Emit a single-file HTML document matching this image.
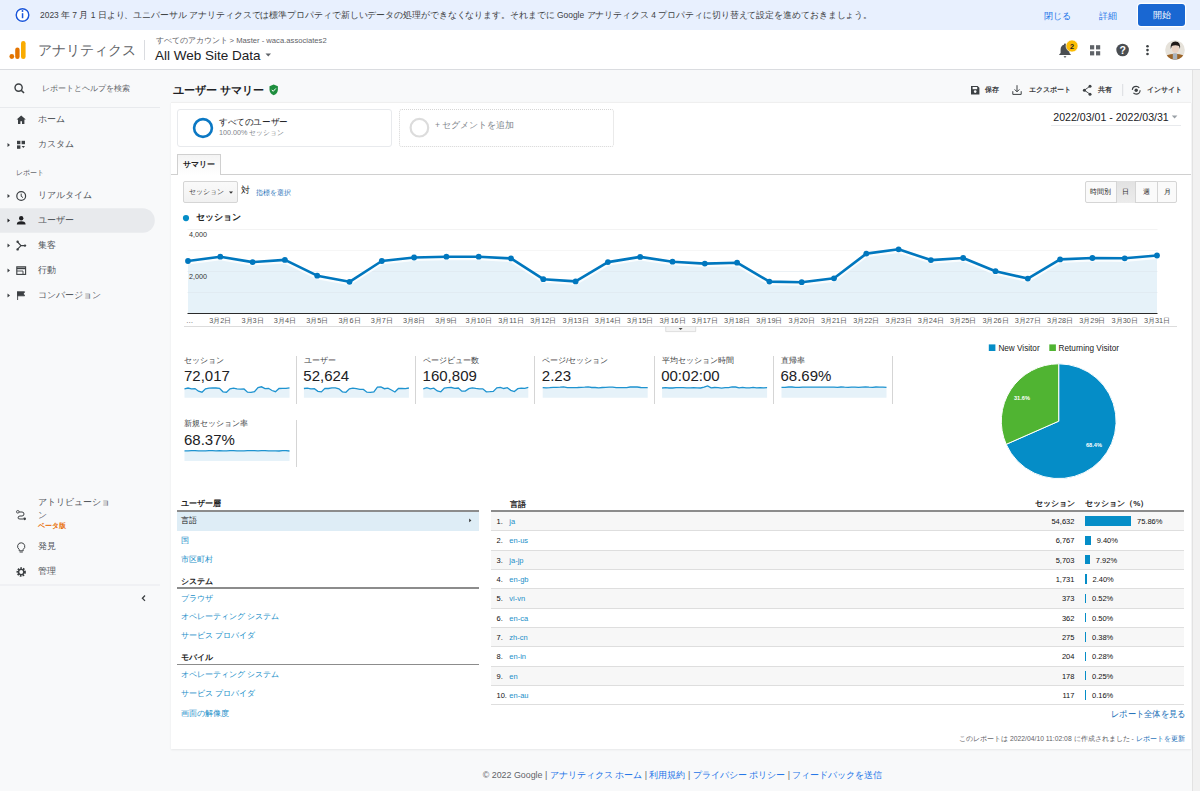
<!DOCTYPE html>
<html><head><meta charset="utf-8">
<style>
*{box-sizing:border-box;margin:0;padding:0}
html,body{width:1200px;height:791px;overflow:hidden;background:#f8f9fa;font-family:"Liberation Sans",sans-serif;color:#202124}
.a{position:absolute;white-space:nowrap}
.c{transform:translateY(-50%)}
#banner{position:absolute;left:0;top:0;width:1200px;height:30px;background:#e8f0fe}
#header{position:absolute;left:0;top:30px;width:1200px;height:40px;background:#fff;border-bottom:1px solid #dadce0}
#side{position:absolute;left:0;top:70px;width:160px;height:721px;background:#f8f9fa}
#scroll{position:absolute;left:1192px;top:70px;width:8px;height:721px;background:#f1f1f1;border-left:1px solid #e2e2e2}
#card{position:absolute;left:171px;top:102px;width:1020px;height:647px;background:#fff;border-top:1px solid #efefef;box-shadow:0 1px 2px rgba(0,0,0,0.07)}
.nav{font-size:8.7px;color:#51555a}
.blue{color:#1a73e8}
.lnk{color:#1b8fc9}
svg{position:absolute;left:0;top:0;overflow:visible}
.sa{fill:#e6f2f9}
.sl{fill:none;stroke:#1e93d0;stroke-width:1.3}
.ml{font-size:8px;color:#3c4043}
.mv{font-size:15px;color:#202124}
.vd{position:absolute;width:1px;background:#d5d5d5}
.row{position:absolute;left:491px;width:693px;height:19.3px;border-bottom:1px solid #dedede}
.rn{font-size:7.5px;color:#111}
.rl{font-size:7.5px;color:#1b8fc9}
.rv{font-size:7.5px;color:#111}
.ln{font-size:8px;color:#1b8fc9}
</style></head><body>
<div id="banner"></div>
<div id="header"></div>
<div id="side"></div>
<div id="card"></div>
<div id="scroll"></div>

<!-- banner content -->
<svg width="1200" height="791">
  <circle cx="22.5" cy="15" r="7.6" fill="#fff"/><circle cx="22.5" cy="15" r="6.3" fill="none" stroke="#1a56db" stroke-width="1.5"/>
  <rect x="21.8" y="13.2" width="1.5" height="5" fill="#1a56db"/>
  <circle cx="22.5" cy="11" r="0.95" fill="#1a56db"/>
</svg>
<div class="a" style="transform:translateY(-50%) scaleX(0.9904);transform-origin:left center;left:40px;top:15.7px;font-size:8.53px;color:#3c4043">2023 年 7 月 1 日より、ユニバーサル アナリティクスでは標準プロパティで新しいデータの処理ができなくなります。それまでに Google アナリティクス 4 プロパティに切り替えて設定を進めておきましょう。</div>
<div class="a c blue" style="left:1044px;top:15.5px;font-size:9px">閉じる</div>
<div class="a c blue" style="left:1098.5px;top:15.5px;font-size:9px">詳細</div>
<div class="a" style="left:1138px;top:4px;width:47px;height:22px;background:#1967d2;border-radius:3px;box-shadow:0 0 0 1.2px #fff;color:#fff;font-size:9.6px;text-align:center;line-height:22px;font-size:9px">開始</div>

<!-- header content -->
<svg width="1200" height="791">
  <circle cx="11.8" cy="56.5" r="2.4" fill="#e37400"/>
  <rect x="15.2" y="47.5" width="4.4" height="11.5" rx="2.2" fill="#e37400"/>
  <rect x="21" y="41" width="4.6" height="18" rx="2.3" fill="#f9ab00"/>
  <rect x="144" y="40" width="1" height="20" fill="#dadce0"/>
  <path d="M265.5,53.5 L271,53.5 L268.25,56.5 Z" fill="#5f6368"/>
  <!-- bell -->
  <path d="M1065,43.4 c-0.6,0 -1,0.4 -1,1 v0.4 c-2.2,0.5 -3.4,2.4 -3.4,4.6 v3.6 l-1.4,1.4 v0.7 h11.6 v-0.7 l-1.4,-1.4 v-3.6 c0,-2.2 -1.2,-4.1 -3.4,-4.6 v-0.4 c0,-0.6 -0.4,-1 -1,-1z M1063.7,56.2 h2.6 a1.3,1.3 0 0 1 -2.6,0z" fill="#4a4e52"/>
  <circle cx="1072" cy="46" r="6" fill="#fbbc04" stroke="#fff" stroke-width="0.6"/>
  <text x="1072" y="48.6" font-family="Liberation Sans, sans-serif" font-size="7.4" font-weight="bold" fill="#202124" text-anchor="middle">2</text>
  <!-- grid -->
  <rect x="1090" y="45.2" width="4.2" height="4.2" fill="#5f6368"/><rect x="1096" y="45.2" width="4.2" height="4.2" fill="#5f6368"/>
  <rect x="1090" y="51.2" width="4.2" height="4.2" fill="#5f6368"/><rect x="1096" y="51.2" width="4.2" height="4.2" fill="#5f6368"/>
  <!-- help -->
  <circle cx="1122.6" cy="50" r="6.3" fill="#4a4e52"/>
  <text x="1122.6" y="53.8" font-family="Liberation Sans, sans-serif" font-size="10.5" font-weight="bold" fill="#fff" text-anchor="middle">?</text>
  <!-- dots -->
  <circle cx="1147.5" cy="46.2" r="1.3" fill="#3c4043"/><circle cx="1147.5" cy="50.1" r="1.3" fill="#3c4043"/><circle cx="1147.5" cy="54" r="1.3" fill="#3c4043"/>
  <!-- avatar -->
  <clipPath id="av"><circle cx="1175" cy="50" r="9.8"/></clipPath>
  <g clip-path="url(#av)">
  <rect x="1165" y="40" width="20" height="20" fill="#e6e2da"/>
  <path d="M1164,62 L1166,55.6 Q1175,52 1184,55.6 L1186,62 Z" fill="#9c6428"/>
  <rect x="1172.8" y="53.5" width="4.4" height="8" fill="#aab3bd"/>
  <ellipse cx="1175.4" cy="48.6" rx="3.6" ry="4.4" fill="#ead2c2"/>
  <path d="M1170.8,49 Q1170,41.6 1175.4,41.6 Q1180.8,41.6 1180,49 L1179,46 Q1175.4,44.6 1171.8,46 Z" fill="#1f1a17"/>
  </g>
</svg>
<div class="a c" style="left:38px;top:49.5px;font-size:14.1px;color:#5f6368">アナリティクス</div>
<div class="a c" style="left:155.5px;top:41.3px;font-size:7.65px;color:#5f6368">すべてのアカウント &gt; Master - waca.associates2</div>
<div class="a c" style="left:155px;top:55.2px;font-size:13.5px;color:#202124">All Web Site Data</div>

<!-- sidebar -->
<svg width="1200" height="791">
  <circle cx="18.6" cy="87.6" r="3.6" fill="none" stroke="#3c4043" stroke-width="1.4"/>
  <path d="M21.2,90.2 L24,93" stroke="#3c4043" stroke-width="1.6"/>
  <rect x="0" y="107" width="160" height="1" fill="#e8eaed"/>
  <path d="M0,208.3 H142.6 A12.2,12.2 0 0 1 142.6,232.7 H0 Z" fill="#e8eaed"/>
  <rect x="0" y="584.5" width="160" height="1" fill="#e8eaed"/>
  <!-- arrows -->
  <path d="M7.5,143 L10,145 L7.5,147 Z" fill="#3c4043"/>
  <path d="M7.5,194 L10,196 L7.5,198 Z" fill="#3c4043"/>
  <path d="M7.5,218.5 L10,220.5 L7.5,222.5 Z" fill="#202124"/>
  <path d="M7.5,243.5 L10,245.5 L7.5,247.5 Z" fill="#3c4043"/>
  <path d="M7.5,268.5 L10,270.5 L7.5,272.5 Z" fill="#3c4043"/>
  <path d="M7.5,293.5 L10,295.5 L7.5,297.5 Z" fill="#3c4043"/>
  <!-- home -->
  <path d="M21.2,115.6 L16.6,119.6 H18 V124 H20.4 V121.2 H22 V124 H24.4 V119.6 H25.8 Z" fill="#3c4043"/>
  <!-- custom -->
  <rect x="17" y="140.8" width="3.4" height="3.4" fill="#3c4043"/><rect x="21.6" y="140.8" width="3.4" height="3.4" fill="#3c4043"/>
  <rect x="17" y="145.4" width="3.4" height="3.4" fill="#3c4043"/><path d="M21.6,146 h3.4 l-1.7,2 z" fill="#3c4043"/>
  <!-- clock -->
  <circle cx="21.2" cy="196" r="4.4" fill="none" stroke="#3c4043" stroke-width="1.2"/>
  <path d="M21.2,193.6 V196.3 L23,197.6" fill="none" stroke="#3c4043" stroke-width="1"/>
  <!-- user -->
  <circle cx="21.2" cy="218.2" r="2.2" fill="#202124"/>
  <path d="M16.8,224.5 Q16.8,221.3 21.2,221.3 Q25.6,221.3 25.6,224.5 Z" fill="#202124"/>
  <!-- acquisition -->
  <path d="M17.6,242 L21,245.6 L24.8,245.6 M17.6,249.2 L21,245.6" fill="none" stroke="#3c4043" stroke-width="1.1"/>
  <circle cx="17.6" cy="241.8" r="1.2" fill="#3c4043"/><circle cx="17.6" cy="249.4" r="1.2" fill="#3c4043"/><circle cx="25" cy="245.6" r="1.2" fill="#3c4043"/>
  <!-- behavior -->
  <rect x="16.8" y="266.8" width="8.8" height="7.6" fill="none" stroke="#3c4043" stroke-width="1.1"/>
  <path d="M16.8,268.4 H25.6" stroke="#3c4043" stroke-width="1.6"/><path d="M16.8,271 H23 V274.4" fill="none" stroke="#3c4043" stroke-width="0.9"/>
  <!-- flag -->
  <path d="M17.6,291.4 V300 M17.6,291.8 H24.6 L23.4,293.8 L24.6,295.8 H17.6 Z" fill="#3c4043" stroke="#3c4043" stroke-width="0.9"/>
  <!-- attribution -->
  <circle cx="17.8" cy="511.8" r="1.3" fill="none" stroke="#3c4043" stroke-width="0.9"/>
  <path d="M19,512 H22 Q24,512 24,514 Q24,516 22,516 H20 Q18,516 18,518 Q18,519 20,519 H23" fill="none" stroke="#3c4043" stroke-width="1"/>
  <circle cx="24.6" cy="518.8" r="1.4" fill="#3c4043"/>
  <!-- bulb -->
  <path d="M21.2,542.8 a3.6,3.6 0 0 0 -2,6.6 v1.4 h4 v-1.4 a3.6,3.6 0 0 0 -2,-6.6 z" fill="none" stroke="#3c4043" stroke-width="1"/>
  <rect x="19.6" y="551.6" width="3.2" height="0.9" fill="#3c4043"/>
  <!-- gear -->
  <circle cx="21.2" cy="572" r="3.6" fill="none" stroke="#3c4043" stroke-width="2.2" stroke-dasharray="1.6,1"/>
  <circle cx="21.2" cy="572" r="2.6" fill="none" stroke="#3c4043" stroke-width="1.4"/>
  <path d="M145,595.5 L142.4,598.2 L145,600.9" fill="none" stroke="#3c4043" stroke-width="1.3"/>
</svg>
<div class="a c" style="left:41.5px;top:88.5px;font-size:7.75px;color:#5f6368">レポートとヘルプを検索</div>
<div class="a c nav" style="left:37.7px;top:120px">ホーム</div>
<div class="a c nav" style="left:37.7px;top:145px">カスタム</div>
<div class="a c" style="left:15.6px;top:173px;font-size:6.8px;color:#5f6368">レポート</div>
<div class="a c nav" style="left:37.7px;top:196px">リアルタイム</div>
<div class="a c nav" style="left:37.7px;top:220.5px">ユーザー</div>
<div class="a c nav" style="left:37.7px;top:245.5px">集客</div>
<div class="a c nav" style="left:37.7px;top:270.5px">行動</div>
<div class="a c nav" style="left:37.7px;top:295.5px">コンバージョン</div>
<div class="a c nav" style="left:37.7px;top:503.4px">アトリビューショ</div>
<div class="a c nav" style="left:37.7px;top:516.3px">ン</div>
<div class="a c" style="left:37.7px;top:526px;font-size:6.95px;font-weight:bold;color:#e8710a">ベータ版</div>
<div class="a c nav" style="left:37.7px;top:547.2px">発見</div>
<div class="a c nav" style="left:37.7px;top:572px">管理</div>

<!-- title bar -->
<div class="a c" style="left:173px;top:89.6px;font-size:11.35px;font-weight:bold;color:#202124">ユーザー サマリー</div>
<svg width="1200" height="791">
  <path d="M273.7,84.6 L269.5,86.2 V89.6 Q269.5,93.6 273.7,95.2 Q277.9,93.6 277.9,89.6 V86.2 Z" fill="#1e8e3e"/>
  <path d="M271.7,89.8 L273.2,91.3 L275.9,88.4" fill="none" stroke="#fff" stroke-width="1"/>
  <!-- save -->
  <path d="M971,86 H977.6 L979.4,87.8 V94.4 H971 Z" fill="#3c4043"/>
  <rect x="972.6" y="87" width="4.6" height="2.2" fill="#f8f9fa"/>
  <circle cx="975.2" cy="91.6" r="1.3" fill="#f8f9fa"/>
  <!-- export -->
  <path d="M1017,85.2 V91.6 M1014.6,89.4 L1017,91.8 L1019.4,89.4 M1012.8,91.2 V94.4 H1021.2 V91.2" fill="none" stroke="#3c4043" stroke-width="1"/>
  <!-- share -->
  <circle cx="1090" cy="86.2" r="1.5" fill="#3c4043"/><circle cx="1084.4" cy="90.2" r="1.5" fill="#3c4043"/><circle cx="1090" cy="94.2" r="1.5" fill="#3c4043"/>
  <path d="M1090,86.2 L1084.4,90.2 L1090,94.2" fill="none" stroke="#3c4043" stroke-width="0.9"/>
  <rect x="1122.2" y="84" width="1" height="12" fill="#dadce0"/>
  <!-- insight -->
  <circle cx="1136.2" cy="90.2" r="3.9" fill="none" stroke="#3c4043" stroke-width="1.2" stroke-dasharray="9,3.3"/>
  <circle cx="1136.2" cy="90.2" r="1.7" fill="#3c4043"/>
  <!-- date triangle -->
  <path d="M1171.8,115.6 L1177.4,115.6 L1174.6,118.6 Z" fill="#9aa0a6"/>
  <rect x="1051" y="125" width="130" height="1" fill="#e8eaed"/>
</svg>
<div class="a c" style="left:985.4px;top:90.2px;font-size:7.2px;font-weight:bold;color:#3c4043">保存</div>
<div class="a c" style="left:1028.7px;top:90.2px;font-size:7.2px;font-weight:bold;color:#3c4043">エクスポート</div>
<div class="a c" style="left:1098.3px;top:90.2px;font-size:7.2px;font-weight:bold;color:#3c4043">共有</div>
<div class="a c" style="left:1146.9px;top:90.2px;font-size:7.2px;font-weight:bold;color:#3c4043">インサイト</div>
<div class="a c" style="left:1053.3px;top:116.8px;font-size:10.6px;color:#202124">2022/03/01 - 2022/03/31</div>

<!-- segments -->
<div class="a" style="left:177px;top:108.8px;width:215px;height:38.7px;border:1px solid #e8eaed;border-radius:3px;background:#fff"></div>
<div class="a" style="left:399px;top:108.8px;width:215px;height:38.7px;border:1px dotted #d6d6d6;border-radius:3px;background:#fff"></div>
<svg width="1200" height="791">
  <circle cx="203" cy="128" r="8.9" fill="none" stroke="#0b78c4" stroke-width="2.6"/>
  <circle cx="419.4" cy="127.7" r="8.8" fill="none" stroke="#dcdcdc" stroke-width="2.2"/>
</svg>
<div class="a" style="transform:translateY(-50%) scaleX(0.955);transform-origin:left center;left:219.2px;top:122.8px;font-size:8.58px;color:#202124">すべてのユーザー</div>
<div class="a" style="transform:translateY(-50%) scaleX(0.975);transform-origin:left center;left:219.2px;top:133px;font-size:7.4px;color:#80868b">100.00% セッション</div>
<div class="a c" style="left:435px;top:126px;font-size:8.5px;color:#80868b">+ セグメントを追加</div>

<!-- tabs -->
<div class="a" style="left:171px;top:174px;width:1020px;height:1px;background:#d0d0d0"></div>
<div class="a" style="left:177px;top:154px;width:44px;height:21px;border:1px solid #d0d0d0;border-bottom:none;background:linear-gradient(#f4f4f4,#fff);"></div>
<div class="a c" style="left:183px;top:164.4px;font-size:7.97px;font-weight:bold;color:#222">サマリー</div>

<!-- chart controls -->
<div class="a" style="left:183.4px;top:181.3px;width:54.4px;height:21.5px;border:1px solid #d5d5d5;border-radius:2px;background:linear-gradient(#fafafa,#f1f1f1)"></div>
<div class="a c" style="left:188.8px;top:192.3px;font-size:7.2px;color:#444">セッション</div>
<svg width="1200" height="791"><path d="M229,191.6 L233,191.6 L231,193.8 Z" fill="#333"/></svg>
<div class="a c" style="left:241px;top:191.4px;font-size:8.6px;color:#222">対</div>
<div class="a c" style="left:256.2px;top:192.8px;font-size:7.2px;color:#1b70b8">指標を選択</div>
<div class="a" style="left:1085px;top:181px;width:92px;height:22px;border:1px solid #d5d5d5;border-radius:2px;background:#fafafa"></div>
<div class="a" style="left:1115.7px;top:181px;width:20.5px;height:22px;background:linear-gradient(#e2e2e2,#ececec);border-left:1px solid #d5d5d5;border-right:1px solid #d5d5d5"></div>
<div class="a" style="left:1156.5px;top:181px;width:1px;height:22px;background:#d5d5d5"></div>
<div class="a c" style="left:1090px;top:192.3px;font-size:7.2px;color:#222">時間別</div>
<div class="a c" style="left:1122.2px;top:192.3px;font-size:7.4px;color:#222">日</div>
<div class="a c" style="left:1142.7px;top:192.3px;font-size:7.2px;color:#222">週</div>
<div class="a c" style="left:1163.5px;top:192.3px;font-size:7.2px;color:#222">月</div>

<!-- legend -->
<svg width="1200" height="791"><circle cx="186" cy="218.1" r="3.1" fill="#058dc7"/></svg>
<div class="a c" style="left:195.6px;top:218px;font-size:8.6px;font-weight:bold;color:#222">セッション</div>

<!-- main chart -->
<svg width="1200" height="791">
  <rect x="187.5" y="229" width="970" height="0.8" fill="#f0f0f0"/>
  <path d="M188.0,261.0 L220.3,256.7 L252.6,262.1 L284.9,259.9 L317.2,275.7 L349.5,281.8 L381.8,261.0 L414.1,257.5 L446.4,256.7 L478.7,256.7 L511.0,258.4 L543.3,279.2 L575.6,281.4 L607.9,262.1 L640.2,256.9 L672.5,261.7 L704.8,263.6 L737.1,262.7 L769.4,281.6 L801.7,282.2 L834.0,278.3 L866.3,253.6 L898.6,249.3 L930.9,260.1 L963.2,258.0 L995.5,271.2 L1027.8,278.6 L1060.1,259.4 L1092.4,258.0 L1124.7,258.3 L1157.0,255.5 L1157.0,313 L188.0,313 Z" fill="#e6f2f9"/>
  <rect x="187.5" y="250" width="970" height="0.8" fill="#ececec" opacity="0.6"/>
  <rect x="187.5" y="271" width="970" height="0.8" fill="#dde7ee" opacity="0.7"/>
  <rect x="187.5" y="292" width="970" height="0.8" fill="#dde7ee" opacity="0.7"/>
  <path d="M188.0,261.0 L220.3,256.7 L252.6,262.1 L284.9,259.9 L317.2,275.7 L349.5,281.8 L381.8,261.0 L414.1,257.5 L446.4,256.7 L478.7,256.7 L511.0,258.4 L543.3,279.2 L575.6,281.4 L607.9,262.1 L640.2,256.9 L672.5,261.7 L704.8,263.6 L737.1,262.7 L769.4,281.6 L801.7,282.2 L834.0,278.3 L866.3,253.6 L898.6,249.3 L930.9,260.1 L963.2,258.0 L995.5,271.2 L1027.8,278.6 L1060.1,259.4 L1092.4,258.0 L1124.7,258.3 L1157.0,255.5" fill="none" stroke="#fff" stroke-width="4.4" stroke-linejoin="round" opacity="0.8" transform="translate(0,1.4)"/>
  <path d="M188.0,261.0 L220.3,256.7 L252.6,262.1 L284.9,259.9 L317.2,275.7 L349.5,281.8 L381.8,261.0 L414.1,257.5 L446.4,256.7 L478.7,256.7 L511.0,258.4 L543.3,279.2 L575.6,281.4 L607.9,262.1 L640.2,256.9 L672.5,261.7 L704.8,263.6 L737.1,262.7 L769.4,281.6 L801.7,282.2 L834.0,278.3 L866.3,253.6 L898.6,249.3 L930.9,260.1 L963.2,258.0 L995.5,271.2 L1027.8,278.6 L1060.1,259.4 L1092.4,258.0 L1124.7,258.3 L1157.0,255.5" fill="none" stroke="#0077be" stroke-width="2.6" stroke-linejoin="round"/>
  <g fill="#0077be"><circle cx="188.0" cy="261.0" r="2.9"/><circle cx="220.3" cy="256.7" r="2.9"/><circle cx="252.6" cy="262.1" r="2.9"/><circle cx="284.9" cy="259.9" r="2.9"/><circle cx="317.2" cy="275.7" r="2.9"/><circle cx="349.5" cy="281.8" r="2.9"/><circle cx="381.8" cy="261.0" r="2.9"/><circle cx="414.1" cy="257.5" r="2.9"/><circle cx="446.4" cy="256.7" r="2.9"/><circle cx="478.7" cy="256.7" r="2.9"/><circle cx="511.0" cy="258.4" r="2.9"/><circle cx="543.3" cy="279.2" r="2.9"/><circle cx="575.6" cy="281.4" r="2.9"/><circle cx="607.9" cy="262.1" r="2.9"/><circle cx="640.2" cy="256.9" r="2.9"/><circle cx="672.5" cy="261.7" r="2.9"/><circle cx="704.8" cy="263.6" r="2.9"/><circle cx="737.1" cy="262.7" r="2.9"/><circle cx="769.4" cy="281.6" r="2.9"/><circle cx="801.7" cy="282.2" r="2.9"/><circle cx="834.0" cy="278.3" r="2.9"/><circle cx="866.3" cy="253.6" r="2.9"/><circle cx="898.6" cy="249.3" r="2.9"/><circle cx="930.9" cy="260.1" r="2.9"/><circle cx="963.2" cy="258.0" r="2.9"/><circle cx="995.5" cy="271.2" r="2.9"/><circle cx="1027.8" cy="278.6" r="2.9"/><circle cx="1060.1" cy="259.4" r="2.9"/><circle cx="1092.4" cy="258.0" r="2.9"/><circle cx="1124.7" cy="258.3" r="2.9"/><circle cx="1157.0" cy="255.5" r="2.9"/></g>
  <rect x="187.5" y="313" width="970" height="1" fill="#2a2a2a"/>
  <rect x="184" y="326" width="993" height="1" fill="#dcdcdc"/>
  <g font-family="Liberation Sans, sans-serif" font-size="7.3" fill="#555" text-anchor="middle"><text x="220.3" y="323">3月2日</text><text x="252.6" y="323">3月3日</text><text x="284.9" y="323">3月4日</text><text x="317.2" y="323">3月5日</text><text x="349.5" y="323">3月6日</text><text x="381.8" y="323">3月7日</text><text x="414.1" y="323">3月8日</text><text x="446.4" y="323">3月9日</text><text x="478.7" y="323">3月10日</text><text x="511.0" y="323">3月11日</text><text x="543.3" y="323">3月12日</text><text x="575.6" y="323">3月13日</text><text x="607.9" y="323">3月14日</text><text x="640.2" y="323">3月15日</text><text x="672.5" y="323">3月16日</text><text x="704.8" y="323">3月17日</text><text x="737.1" y="323">3月18日</text><text x="769.4" y="323">3月19日</text><text x="801.7" y="323">3月20日</text><text x="834.0" y="323">3月21日</text><text x="866.3" y="323">3月22日</text><text x="898.6" y="323">3月23日</text><text x="930.9" y="323">3月24日</text><text x="963.2" y="323">3月25日</text><text x="995.5" y="323">3月26日</text><text x="1027.8" y="323">3月27日</text><text x="1060.1" y="323">3月28日</text><text x="1092.4" y="323">3月29日</text><text x="1124.7" y="323">3月30日</text><text x="1157.0" y="323">3月31日</text></g>
  <path d="M665.7,326.5 H695.7 V331.6 H665.7 Z" fill="#f4f4f4" stroke="#d8d8d8" stroke-width="0.8"/>
  <path d="M678.6,328 L682.6,328 L680.6,330 Z" fill="#444"/>
</svg>
<div class="a c" style="left:189px;top:234.4px;font-size:7.2px;color:#333">4,000</div>
<div class="a c" style="left:189px;top:276.4px;font-size:7.2px;color:#333">2,000</div>
<div class="a c" style="left:186px;top:320px;font-size:7.3px;color:#555">…</div>

<!-- metrics -->
<svg width="1200" height="791"><path class="sa" d="M184.5,388.8 L188.0,388.0 L191.5,388.9 L195.0,388.6 L198.5,391.2 L202.0,392.2 L205.5,388.8 L209.0,388.2 L212.5,388.0 L216.0,388.0 L219.5,388.3 L223.0,391.8 L226.5,392.2 L230.0,388.9 L233.5,388.1 L237.0,388.9 L240.5,389.2 L244.0,389.0 L247.5,392.2 L251.0,392.3 L254.5,391.6 L258.0,387.5 L261.5,386.8 L265.0,388.6 L268.5,388.3 L272.0,390.5 L275.5,391.7 L279.0,388.5 L282.5,388.3 L286.0,388.3 L289.5,387.8 L289.5,397.8 L184.5,397.8 Z"/><path class="sl" d="M184.5,388.8 L188.0,388.0 L191.5,388.9 L195.0,388.6 L198.5,391.2 L202.0,392.2 L205.5,388.8 L209.0,388.2 L212.5,388.0 L216.0,388.0 L219.5,388.3 L223.0,391.8 L226.5,392.2 L230.0,388.9 L233.5,388.1 L237.0,388.9 L240.5,389.2 L244.0,389.0 L247.5,392.2 L251.0,392.3 L254.5,391.6 L258.0,387.5 L261.5,386.8 L265.0,388.6 L268.5,388.3 L272.0,390.5 L275.5,391.7 L279.0,388.5 L282.5,388.3 L286.0,388.3 L289.5,387.8"/>
<path class="sa" d="M303.9,388.5 L307.4,388.1 L310.9,388.8 L314.4,388.7 L317.9,391.3 L321.4,391.9 L324.9,388.3 L328.4,388.5 L331.9,387.8 L335.4,387.8 L338.9,388.8 L342.4,391.8 L345.9,392.3 L349.4,388.9 L352.9,388.2 L356.4,388.6 L359.9,389.3 L363.4,389.4 L366.9,392.2 L370.4,392.3 L373.9,391.8 L377.4,387.1 L380.9,387.0 L384.4,388.7 L387.9,388.1 L391.4,390.0 L394.9,392.0 L398.4,388.5 L401.9,388.4 L405.4,388.6 L408.9,388.0 L408.9,397.8 L303.9,397.8 Z"/><path class="sl" d="M303.9,388.5 L307.4,388.1 L310.9,388.8 L314.4,388.7 L317.9,391.3 L321.4,391.9 L324.9,388.3 L328.4,388.5 L331.9,387.8 L335.4,387.8 L338.9,388.8 L342.4,391.8 L345.9,392.3 L349.4,388.9 L352.9,388.2 L356.4,388.6 L359.9,389.3 L363.4,389.4 L366.9,392.2 L370.4,392.3 L373.9,391.8 L377.4,387.1 L380.9,387.0 L384.4,388.7 L387.9,388.1 L391.4,390.0 L394.9,392.0 L398.4,388.5 L401.9,388.4 L405.4,388.6 L408.9,388.0"/>
<path class="sa" d="M423.3,388.9 L426.8,387.7 L430.3,388.9 L433.8,388.2 L437.3,391.0 L440.8,391.8 L444.3,388.0 L447.8,387.6 L451.3,387.5 L454.8,388.4 L458.3,388.0 L461.8,391.2 L465.3,391.1 L468.8,388.6 L472.3,387.8 L475.8,388.4 L479.3,388.9 L482.8,388.8 L486.3,391.8 L489.8,391.7 L493.3,391.4 L496.8,387.8 L500.3,387.3 L503.8,388.5 L507.3,387.7 L510.8,390.3 L514.3,391.5 L517.8,388.7 L521.3,388.1 L524.8,388.3 L528.3,387.4 L528.3,397.8 L423.3,397.8 Z"/><path class="sl" d="M423.3,388.9 L426.8,387.7 L430.3,388.9 L433.8,388.2 L437.3,391.0 L440.8,391.8 L444.3,388.0 L447.8,387.6 L451.3,387.5 L454.8,388.4 L458.3,388.0 L461.8,391.2 L465.3,391.1 L468.8,388.6 L472.3,387.8 L475.8,388.4 L479.3,388.9 L482.8,388.8 L486.3,391.8 L489.8,391.7 L493.3,391.4 L496.8,387.8 L500.3,387.3 L503.8,388.5 L507.3,387.7 L510.8,390.3 L514.3,391.5 L517.8,388.7 L521.3,388.1 L524.8,388.3 L528.3,387.4"/>
<path class="sa" d="M542.7,387.6 L546.2,387.8 L549.7,387.7 L553.2,387.4 L556.7,387.4 L560.2,387.2 L563.7,386.9 L567.2,387.6 L570.7,387.7 L574.2,387.6 L577.7,387.5 L581.2,387.3 L584.7,387.2 L588.2,386.9 L591.7,387.5 L595.2,387.5 L598.7,387.9 L602.2,387.5 L605.7,387.4 L609.2,387.2 L612.7,387.1 L616.2,387.7 L619.7,387.7 L623.2,387.6 L626.7,387.6 L630.2,387.0 L633.7,386.8 L637.2,387.0 L640.7,387.5 L644.2,387.6 L647.7,387.6 L647.7,397.8 L542.7,397.8 Z"/><path class="sl" d="M542.7,387.6 L546.2,387.8 L549.7,387.7 L553.2,387.4 L556.7,387.4 L560.2,387.2 L563.7,386.9 L567.2,387.6 L570.7,387.7 L574.2,387.6 L577.7,387.5 L581.2,387.3 L584.7,387.2 L588.2,386.9 L591.7,387.5 L595.2,387.5 L598.7,387.9 L602.2,387.5 L605.7,387.4 L609.2,387.2 L612.7,387.1 L616.2,387.7 L619.7,387.7 L623.2,387.6 L626.7,387.6 L630.2,387.0 L633.7,386.8 L637.2,387.0 L640.7,387.5 L644.2,387.6 L647.7,387.6"/>
<path class="sa" d="M662.1,388.0 L665.6,387.6 L669.1,388.0 L672.6,388.0 L676.1,387.6 L679.6,387.7 L683.1,387.7 L686.6,387.8 L690.1,387.8 L693.6,387.7 L697.1,387.8 L700.6,388.0 L704.1,387.2 L707.6,385.9 L711.1,387.9 L714.6,387.5 L718.1,387.6 L721.6,388.1 L725.1,387.7 L728.6,387.7 L732.1,386.9 L735.6,387.0 L739.1,387.8 L742.6,387.3 L746.1,387.8 L749.6,387.8 L753.1,387.4 L756.6,387.8 L760.1,387.7 L763.6,387.8 L767.1,387.6 L767.1,397.8 L662.1,397.8 Z"/><path class="sl" d="M662.1,388.0 L665.6,387.6 L669.1,388.0 L672.6,388.0 L676.1,387.6 L679.6,387.7 L683.1,387.7 L686.6,387.8 L690.1,387.8 L693.6,387.7 L697.1,387.8 L700.6,388.0 L704.1,387.2 L707.6,385.9 L711.1,387.9 L714.6,387.5 L718.1,387.6 L721.6,388.1 L725.1,387.7 L728.6,387.7 L732.1,386.9 L735.6,387.0 L739.1,387.8 L742.6,387.3 L746.1,387.8 L749.6,387.8 L753.1,387.4 L756.6,387.8 L760.1,387.7 L763.6,387.8 L767.1,387.6"/>
<path class="sa" d="M781.5,387.3 L785.0,387.3 L788.5,387.0 L792.0,387.0 L795.5,387.3 L799.0,387.4 L802.5,387.1 L806.0,387.2 L809.5,387.2 L813.0,387.1 L816.5,387.1 L820.0,387.1 L823.5,387.1 L827.0,387.2 L830.5,387.1 L834.0,387.1 L837.5,387.3 L841.0,387.0 L844.5,387.2 L848.0,387.3 L851.5,387.1 L855.0,387.1 L858.5,387.3 L862.0,387.1 L865.5,387.0 L869.0,387.2 L872.5,387.3 L876.0,387.0 L879.5,387.1 L883.0,387.1 L886.5,387.4 L886.5,397.8 L781.5,397.8 Z"/><path class="sl" d="M781.5,387.3 L785.0,387.3 L788.5,387.0 L792.0,387.0 L795.5,387.3 L799.0,387.4 L802.5,387.1 L806.0,387.2 L809.5,387.2 L813.0,387.1 L816.5,387.1 L820.0,387.1 L823.5,387.1 L827.0,387.2 L830.5,387.1 L834.0,387.1 L837.5,387.3 L841.0,387.0 L844.5,387.2 L848.0,387.3 L851.5,387.1 L855.0,387.1 L858.5,387.3 L862.0,387.1 L865.5,387.0 L869.0,387.2 L872.5,387.3 L876.0,387.0 L879.5,387.1 L883.0,387.1 L886.5,387.4"/>
<path class="sa" d="M184.5,450.8 L188.0,450.9 L191.5,450.7 L195.0,450.7 L198.5,450.9 L202.0,450.9 L205.5,450.8 L209.0,450.7 L212.5,450.7 L216.0,450.8 L219.5,450.7 L223.0,450.9 L226.5,450.9 L230.0,450.7 L233.5,450.7 L237.0,450.9 L240.5,450.9 L244.0,450.9 L247.5,450.7 L251.0,450.7 L254.5,450.7 L258.0,450.9 L261.5,450.7 L265.0,450.7 L268.5,450.8 L272.0,450.8 L275.5,450.8 L279.0,451.0 L282.5,450.7 L286.0,450.6 L289.5,451.0 L289.5,461 L184.5,461 Z"/><path class="sl" d="M184.5,450.8 L188.0,450.9 L191.5,450.7 L195.0,450.7 L198.5,450.9 L202.0,450.9 L205.5,450.8 L209.0,450.7 L212.5,450.7 L216.0,450.8 L219.5,450.7 L223.0,450.9 L226.5,450.9 L230.0,450.7 L233.5,450.7 L237.0,450.9 L240.5,450.9 L244.0,450.9 L247.5,450.7 L251.0,450.7 L254.5,450.7 L258.0,450.9 L261.5,450.7 L265.0,450.7 L268.5,450.8 L272.0,450.8 L275.5,450.8 L279.0,451.0 L282.5,450.7 L286.0,450.6 L289.5,451.0"/></svg>
<div class="vd" style="left:295.6px;top:355.8px;height:48px"></div>
<div class="vd" style="left:415.2px;top:355.8px;height:48px"></div>
<div class="vd" style="left:534.4px;top:355.8px;height:48px"></div>
<div class="vd" style="left:654px;top:355.8px;height:48px"></div>
<div class="vd" style="left:773.3px;top:355.8px;height:48px"></div>
<div class="vd" style="left:892.3px;top:355.8px;height:48px"></div>
<div class="vd" style="left:295.6px;top:420px;height:47px"></div>
<div class="a c ml" style="left:184.2px;top:359.6px">セッション</div>
<div class="a c ml" style="left:303.5px;top:359.6px">ユーザー</div>
<div class="a c ml" style="left:422.8px;top:359.6px">ページビュー数</div>
<div class="a c ml" style="left:542px;top:359.6px">ページ/セッション</div>
<div class="a c ml" style="left:661.5px;top:359.6px">平均セッション時間</div>
<div class="a c ml" style="left:780.7px;top:359.6px">直帰率</div>
<div class="a c ml" style="left:184.2px;top:423.3px">新規セッション率</div>
<div class="a mv" style="left:184px;top:367px">72,017</div>
<div class="a mv" style="left:303.3px;top:367px">52,624</div>
<div class="a mv" style="left:422.6px;top:367px">160,809</div>
<div class="a mv" style="left:541.8px;top:367px">2.23</div>
<div class="a mv" style="left:661.2px;top:367px">00:02:00</div>
<div class="a mv" style="left:780.5px;top:367px">68.69%</div>
<div class="a mv" style="left:184px;top:430.7px">68.37%</div>

<!-- pie -->
<svg width="1200" height="791">
  <rect x="988.8" y="344.4" width="6.6" height="6.6" fill="#058dc7"/>
  <rect x="1049.3" y="344.4" width="6.6" height="6.6" fill="#50b432"/>
  <path d="M1058.7,421.2 L1058.7,363.8 A57.4,57.4 0 1,1 1006.17,444.33 Z" fill="#058dc7" stroke="#fff" stroke-width="1"/><path d="M1058.7,421.2 L1006.17,444.33 A57.4,57.4 0 0,1 1058.7,363.8 Z" fill="#50b432" stroke="#fff" stroke-width="1"/>
</svg>
<div class="a c" style="left:998.4px;top:348px;font-size:8.2px;color:#222">New Visitor</div>
<div class="a c" style="left:1058.6px;top:348px;font-size:8.2px;color:#222">Returning Visitor</div>
<div class="a c" style="left:1014px;top:398.3px;font-size:5.6px;font-weight:bold;color:#fff">31.6%</div>
<div class="a c" style="left:1086px;top:444.8px;font-size:5.6px;font-weight:bold;color:#fff">68.4%</div>

<!-- left table -->
<div class="a c" style="left:180.9px;top:503.3px;font-size:8px;font-weight:bold;color:#222">ユーザー層</div>
<div class="a" style="left:177px;top:510.4px;width:301.5px;height:1.5px;background:#8c8c8c"></div>
<div class="a" style="left:177px;top:512px;width:301.5px;height:18.7px;background:#deedf6"></div>
<div class="a c" style="left:181px;top:520.4px;font-size:8px;color:#222">言語</div>
<svg width="1200" height="791"><path d="M469.2,518.6 L471.4,520.4 L469.2,522.2 Z" fill="#333"/></svg>
<div class="a c ln" style="left:181px;top:540px">国</div>
<div class="a c ln" style="left:181px;top:559.3px">市区町村</div>
<div class="a c" style="left:180.9px;top:580.8px;font-size:8px;font-weight:bold;color:#222">システム</div>
<div class="a" style="left:177px;top:587.2px;width:301.5px;height:1.4px;background:#8c8c8c"></div>
<div class="a c ln" style="left:181px;top:597.5px">ブラウザ</div>
<div class="a c ln" style="left:181px;top:616.3px">オペレーティング システム</div>
<div class="a c ln" style="left:181px;top:635.4px">サービス プロバイダ</div>
<div class="a c" style="left:180.9px;top:657px;font-size:8px;font-weight:bold;color:#222">モバイル</div>
<div class="a" style="left:177px;top:663.5px;width:301.5px;height:1.4px;background:#8c8c8c"></div>
<div class="a c ln" style="left:181px;top:673.8px">オペレーティング システム</div>
<div class="a c ln" style="left:181px;top:693.3px">サービス プロバイダ</div>
<div class="a c ln" style="left:181px;top:712.5px">画面の解像度</div>

<!-- right table -->
<div class="a c" style="left:510px;top:503.5px;font-size:8px;font-weight:bold;color:#222">言語</div>
<div class="a c" style="left:1035px;top:503px;font-size:8px;font-weight:bold;color:#222">セッション</div>
<div class="a c" style="left:1085.2px;top:503px;font-size:8px;font-weight:bold;color:#222">セッション（%）</div>
<div class="a" style="left:491px;top:510.4px;width:693px;height:1.5px;background:#8c8c8c"></div>
<div class="row" style="top:512.00px;background:#f7f7f7"></div>
<div class="a c rn" style="left:496.5px;top:521.06px">1.</div>
<div class="a c rl" style="left:509.3px;top:521.06px">ja</div>
<div class="a c rv" style="right:125.6px;top:521.06px">54,632</div>
<div class="a" style="left:1085.2px;top:516.26px;width:45.97px;height:9.6px;background:#058dc7"></div>
<div class="a c rv" style="left:1137.0px;top:521.06px">75.86%</div>
<div class="row" style="top:531.32px;background:#fff"></div>
<div class="a c rn" style="left:496.5px;top:540.38px">2.</div>
<div class="a c rl" style="left:509.3px;top:540.38px">en-us</div>
<div class="a c rv" style="right:125.6px;top:540.38px">6,767</div>
<div class="a" style="left:1085.2px;top:535.58px;width:5.70px;height:9.6px;background:#058dc7"></div>
<div class="a c rv" style="left:1096.7px;top:540.38px">9.40%</div>
<div class="row" style="top:550.64px;background:#f7f7f7"></div>
<div class="a c rn" style="left:496.5px;top:559.70px">3.</div>
<div class="a c rl" style="left:509.3px;top:559.70px">ja-jp</div>
<div class="a c rv" style="right:125.6px;top:559.70px">5,703</div>
<div class="a" style="left:1085.2px;top:554.90px;width:4.80px;height:9.6px;background:#058dc7"></div>
<div class="a c rv" style="left:1095.8px;top:559.70px">7.92%</div>
<div class="row" style="top:569.96px;background:#fff"></div>
<div class="a c rn" style="left:496.5px;top:579.02px">4.</div>
<div class="a c rl" style="left:509.3px;top:579.02px">en-gb</div>
<div class="a c rv" style="right:125.6px;top:579.02px">1,731</div>
<div class="a" style="left:1085.2px;top:574.22px;width:1.45px;height:9.6px;background:#058dc7"></div>
<div class="a c rv" style="left:1092.5px;top:579.02px">2.40%</div>
<div class="row" style="top:589.28px;background:#f7f7f7"></div>
<div class="a c rn" style="left:496.5px;top:598.34px">5.</div>
<div class="a c rl" style="left:509.3px;top:598.34px">vi-vn</div>
<div class="a c rv" style="right:125.6px;top:598.34px">373</div>
<div class="a" style="left:1085.2px;top:593.54px;width:1.00px;height:9.6px;background:#058dc7"></div>
<div class="a c rv" style="left:1092.0px;top:598.34px">0.52%</div>
<div class="row" style="top:608.60px;background:#fff"></div>
<div class="a c rn" style="left:496.5px;top:617.66px">6.</div>
<div class="a c rl" style="left:509.3px;top:617.66px">en-ca</div>
<div class="a c rv" style="right:125.6px;top:617.66px">362</div>
<div class="a" style="left:1085.2px;top:612.86px;width:1.00px;height:9.6px;background:#058dc7"></div>
<div class="a c rv" style="left:1092.0px;top:617.66px">0.50%</div>
<div class="row" style="top:627.92px;background:#f7f7f7"></div>
<div class="a c rn" style="left:496.5px;top:636.98px">7.</div>
<div class="a c rl" style="left:509.3px;top:636.98px">zh-cn</div>
<div class="a c rv" style="right:125.6px;top:636.98px">275</div>
<div class="a" style="left:1085.2px;top:632.18px;width:1.00px;height:9.6px;background:#058dc7"></div>
<div class="a c rv" style="left:1092.0px;top:636.98px">0.38%</div>
<div class="row" style="top:647.24px;background:#fff"></div>
<div class="a c rn" style="left:496.5px;top:656.30px">8.</div>
<div class="a c rl" style="left:509.3px;top:656.30px">en-in</div>
<div class="a c rv" style="right:125.6px;top:656.30px">204</div>
<div class="a" style="left:1085.2px;top:651.50px;width:1.00px;height:9.6px;background:#058dc7"></div>
<div class="a c rv" style="left:1092.0px;top:656.30px">0.28%</div>
<div class="row" style="top:666.56px;background:#f7f7f7"></div>
<div class="a c rn" style="left:496.5px;top:675.62px">9.</div>
<div class="a c rl" style="left:509.3px;top:675.62px">en</div>
<div class="a c rv" style="right:125.6px;top:675.62px">178</div>
<div class="a" style="left:1085.2px;top:670.82px;width:1.00px;height:9.6px;background:#058dc7"></div>
<div class="a c rv" style="left:1092.0px;top:675.62px">0.25%</div>
<div class="row" style="top:685.88px;background:#fff"></div>
<div class="a c rn" style="left:496.5px;top:694.94px">10.</div>
<div class="a c rl" style="left:509.3px;top:694.94px">en-au</div>
<div class="a c rv" style="right:125.6px;top:694.94px">117</div>
<div class="a" style="left:1085.2px;top:690.14px;width:1.00px;height:9.6px;background:#058dc7"></div>
<div class="a c rv" style="left:1092.0px;top:694.94px">0.16%</div>

<div class="a lnk" style="transform:translateY(-50%) scaleX(0.922);transform-origin:left center;left:1111.2px;top:715.2px;font-size:8.6px;color:#1b70b8">レポート全体を見る</div>
<div class="a c" style="left:959.2px;top:738.8px;font-size:6.78px;color:#5f6368">このレポートは 2022/04/10 11:02:08 に作成されました - <span style="color:#1b70b8">レポートを更新</span></div>

<!-- footer -->
<div class="a c" style="left:482.7px;top:775px;font-size:8.9px;color:#5f6368">© 2022 Google | <span class="blue">アナリティクス ホーム</span> | <span class="blue">利用規約</span> | <span class="blue">プライバシー ポリシー</span> | <span class="blue">フィードバックを送信</span></div>
</body></html>
